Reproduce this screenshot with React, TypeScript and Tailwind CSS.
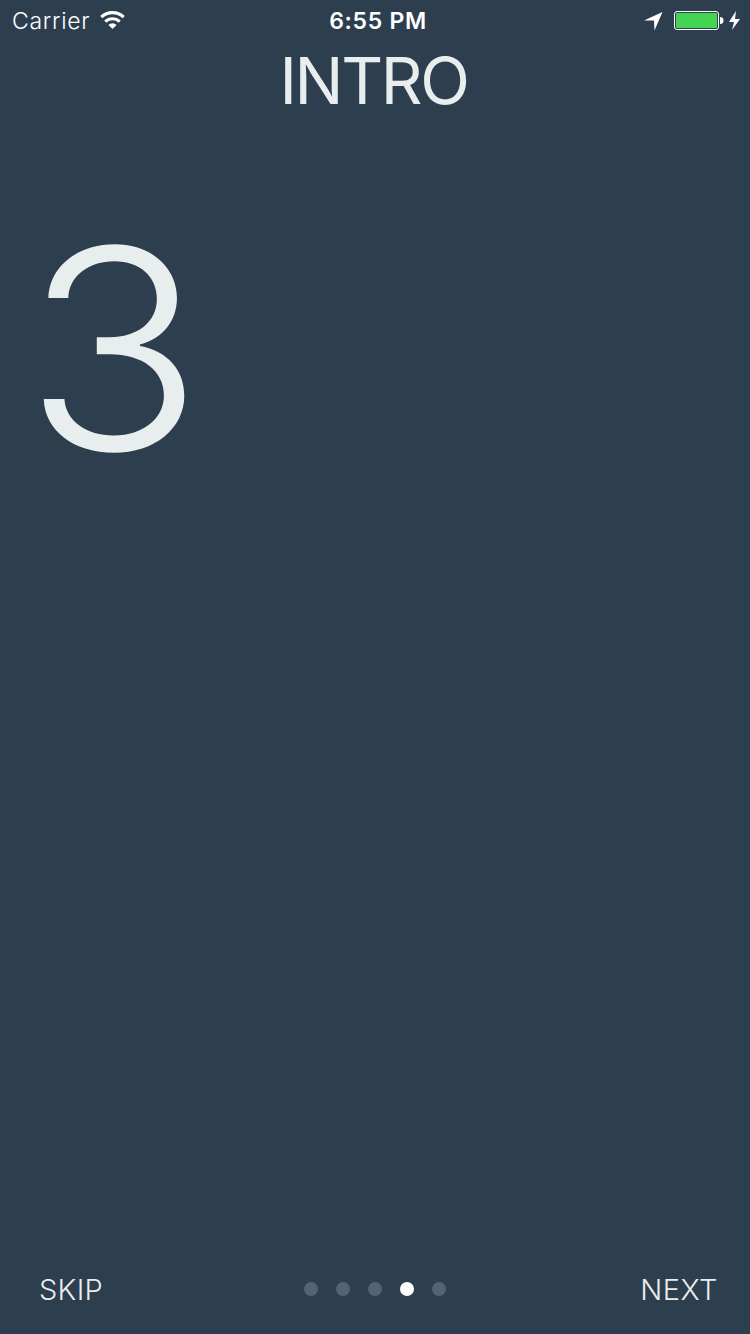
export default function App() {
  return (
    <div className="flex h-[1334px] w-[750px] flex-col overflow-hidden bg-[#2d3e4f] font-['Inter',sans-serif] text-[#e8eeee]">
      <header className="grid h-10 shrink-0 grid-cols-3 items-center text-white">
        <div className="flex items-center gap-[10px] pl-[12px]">
          <span className="pt-[2px] text-[23px] leading-9 font-light tracking-[0.7px]">Carrier</span>
          <svg width="25" height="20" viewBox="0 0 25 20" fill="none" stroke="currentColor" strokeWidth="3.2">
            <path d="M1.3 7.2a16 16 0 0 1 22.4 0M5.3 11.7a10.3 10.3 0 0 1 14.4 0" />
            <path d="M12.5 19l-4.1-4a5.8 5.8 0 0 1 8.2 0z" fill="currentColor" stroke="none" />
          </svg>
        </div>
        <span className="pt-[2px] pl-[6px] text-center text-[23px] leading-9 font-semibold tracking-[0.7px]">6:55 PM</span>
        <div className="flex items-center justify-end pt-[2px] pr-[9px]">
          <svg width="97" height="20" viewBox="0 0 97 20">
            <path d="M0 9.5L18.5 1L10.5 19.5L10 9.5z" fill="#fff" />
            <rect x="30.5" y="0.5" width="44" height="18" rx="2.5" fill="none" stroke="#fff" />
            <rect x="32" y="2" width="41" height="15" rx="1" fill="#43d551" />
            <path d="M76 6a3.5 3.5 0 0 1 0 7z" fill="#fff" />
            <path d="M92 0L85 11h5l-2 8 8-11h-5z" fill="#fff" />
          </svg>
        </div>
      </header>
      <h1 className="h-20 shrink-0 pt-px pr-[3px] text-center text-[65px] leading-[80px] font-normal tracking-[-2.4px]">INTRO</h1>
      <main className="flex-1 pt-[89px] pl-[24px]">
        <div className="w-fit origin-left scale-x-[1.06] text-[279px] leading-[279px] font-light">3</div>
      </main>
      <footer className="grid h-[90px] shrink-0 grid-cols-3 items-center px-[32px] text-[29px] font-light">
        <button className="pt-px pl-[7px] text-left tracking-[0.3px]">SKIP</button>
        <div className="flex justify-center gap-[18px]">
          <i className="size-[14px] rounded-full bg-[#546271]" />
          <i className="size-[14px] rounded-full bg-[#546271]" />
          <i className="size-[14px] rounded-full bg-[#546271]" />
          <i className="size-[14px] rounded-full bg-white" />
          <i className="size-[14px] rounded-full bg-[#546271]" />
        </div>
        <button className="pt-px text-right tracking-[0.5px]">NEXT</button>
      </footer>
    </div>
  );
}
